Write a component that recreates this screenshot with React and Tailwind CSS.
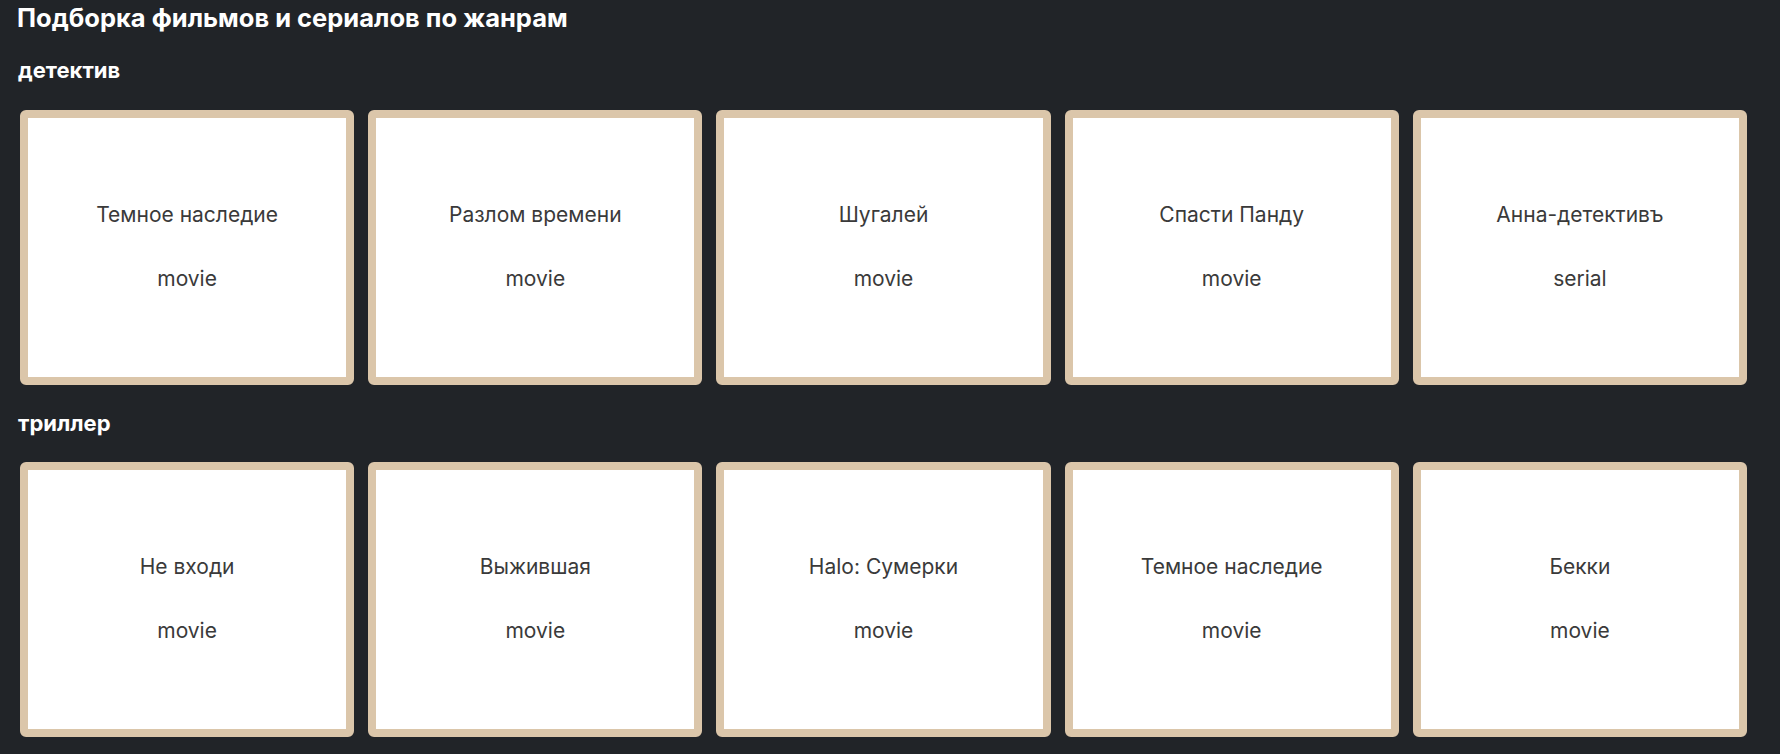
import React from "react";

const genres = [
  {
    name: "детектив",
    items: [
      { title: "Темное наследие", type: "movie" },
      { title: "Разлом времени", type: "movie" },
      { title: "Шугалей", type: "movie" },
      { title: "Спасти Панду", type: "movie" },
      { title: "Анна-детективъ", type: "serial" },
    ],
  },
  {
    name: "триллер",
    items: [
      { title: "Не входи", type: "movie" },
      { title: "Выжившая", type: "movie" },
      { title: "Halo: Сумерки", type: "movie" },
      { title: "Темное наследие", type: "movie" },
      { title: "Бекки", type: "movie" },
    ],
  },
];

// Single card with title and content type
const Card = ({ title, type }) => (
  <div className="h-[275px] rounded-md border-8 border-[#dbc6aa] bg-white flex flex-col items-center justify-center gap-[36px] pb-[2px] text-[21px] leading-[28px] text-[#3a3a3a]">
    <p>{title}</p>
    <p>{type}</p>
  </div>
);

const App = () => {
  return (
    <div
      className="min-h-[754px] bg-[#212428] pl-[17px] pr-[33px]"
      style={{ fontFamily: "Inter, 'Noto Sans', sans-serif" }}
    >
      <h1 className="pt-[3px] text-[25.5px] leading-[30px] font-bold text-white">
        Подборка фильмов и сериалов по жанрам
      </h1>

      {genres.map((genre, i) => (
        <section key={genre.name}>
          <h2
            className={`${i === 0 ? "mt-[25px]" : "mt-[26px]"} ml-[1px] text-[22px] leading-[24px] font-bold text-white`}
          >
            {genre.name}
          </h2>
          <div
            className={`${i === 0 ? "mt-[28px]" : "mt-[27px]"} ml-[3px] grid grid-cols-5 gap-[14px]`}
          >
            {genre.items.map((item, j) => (
              <Card key={j} title={item.title} type={item.type} />
            ))}
          </div>
        </section>
      ))}
    </div>
  );
};

export default App;
